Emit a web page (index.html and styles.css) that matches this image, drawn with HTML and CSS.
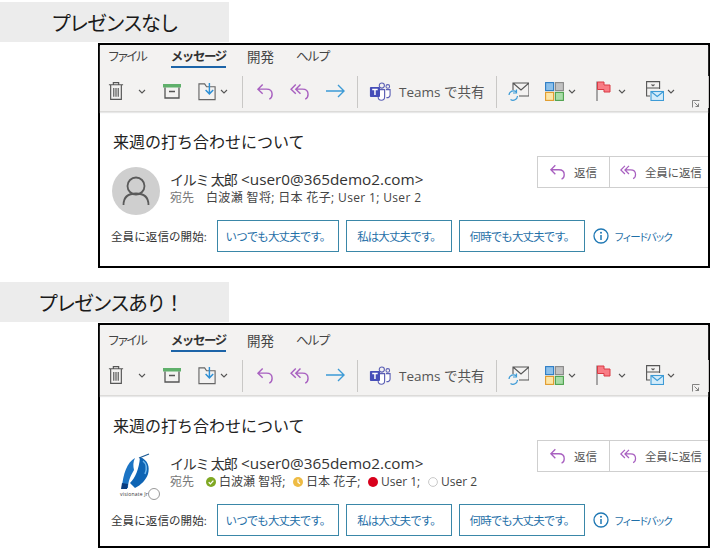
FILE: index.html
```html
<!DOCTYPE html>
<html lang="ja">
<head>
<meta charset="utf-8">
<title>プレゼンス</title>
<link rel="stylesheet" href="styles.css">
</head>
<body>
<svg class="defs" width="0" height="0">
  <symbol id="trash" viewBox="0 0 18 22"><path d="M1 4h16M6 4V1.500h6V4M3 4v16.500h12V4M6.500 7.500v10M9 7.500v10M11.500 7.500v10" fill="none" stroke="#555" stroke-width="1.300"/></symbol>
  <symbol id="chev" viewBox="0 0 8 5"><path d="M1 1l3 3 3-3" fill="none" stroke="#555" stroke-width="1.100"/></symbol>
  <symbol id="archive" viewBox="0 0 18 16"><rect x="0" y="1" width="18" height="3.500" fill="#5fb06b"/><path d="M2 4.500v10.500h14V4.500M6 8.500h6" fill="none" stroke="#555" stroke-width="1.300"/></symbol>
  <symbol id="move" viewBox="0 0 20 20"><path d="M1 18.500V2h6l2 3h9v13.500z" fill="none" stroke="#666" stroke-width="1.200"/><path d="M12 1v11M8 8.500l4 4 4-4" fill="none" stroke="#2d8fd5" stroke-width="1.500"/></symbol>
  <symbol id="reply" viewBox="0 0 20 18"><path d="M7 1.500L2 6.500l5 5M2 6.500h9c4 0 6 2.500 6 5.500s-1.500 4.500-3 5" fill="none" stroke="#a860c0" stroke-width="1.500"/></symbol>
  <symbol id="replyall" viewBox="0 0 22 18"><path d="M6 1.500L1 6.500l5 5M11 1.500L6 6.500l5 5M6 6.500h7c4 0 6 2.500 6 5.500s-1.500 4.500-3 5" fill="none" stroke="#a860c0" stroke-width="1.500"/></symbol>
  <symbol id="forward" viewBox="0 0 20 14"><path d="M0 7h18M12 1l6 6-6 6" fill="none" stroke="#3d9bd6" stroke-width="1.400"/></symbol>
  <symbol id="teams" viewBox="0 0 24 20"><circle cx="14" cy="3.500" r="2.800" fill="none" stroke="#5b5fb5" stroke-width="1.200"/><circle cx="20.500" cy="4.500" r="2" fill="none" stroke="#5b5fb5" stroke-width="1.100"/><path d="M10 8h7v8a3.500 3.500 0 0 1-7 0zM18.500 8H23v6a3 3 0 0 1-4 2.500" fill="#fff" stroke="#5b5fb5" stroke-width="1.200"/><rect x="1" y="5" width="11" height="11" rx="1" fill="#464eb8"/><path d="M3.500 7.800h6M6.500 7.800v6" fill="none" stroke="#fff" stroke-width="1.600"/></symbol>
  <symbol id="mailsync" viewBox="0 0 21 19"><path d="M5 8V1h16v13H11M5 1l8 7 8-7" fill="none" stroke="#555" stroke-width="1.100"/><path d="M1 13a4.500 4.500 0 0 1 7.500-3M8.500 7.500V11H5M9.500 14a4.500 4.500 0 0 1-7 3.500" fill="none" stroke="#3d9bd6" stroke-width="1.200"/></symbol>
  <symbol id="cats" viewBox="0 0 19 19"><rect x=".6" y=".6" width="8" height="8" fill="#8cc0ea" stroke="#2b7cc4" stroke-width="1.100"/><rect x="10.400" y=".6" width="8" height="8" fill="#c2c2c2" stroke="#888" stroke-width="1.100"/><rect x=".6" y="10.400" width="8" height="8" fill="#fde6a8" stroke="#e09a2b" stroke-width="1.100"/><rect x="10.400" y="10.400" width="8" height="8" fill="#a8dca8" stroke="#4da24d" stroke-width="1.100"/></symbol>
  <symbol id="flag" viewBox="0 0 15 20"><path d="M1 0.500V20" stroke="#666" stroke-width="1.100"/><path d="M1.500 1h6.500v3h6v7H8V8.500H1.500z" fill="#f97c85" stroke="#d93a44" stroke-width="1"/></symbol>
  <symbol id="rules" viewBox="0 0 18 20"><path d="M4 15H.6V.6h13V8M.6 7h13M5.500 3.500l1.500 1.200 1.500-1.200" fill="none" stroke="#555" stroke-width="1.100"/><rect x="5" y="10.500" width="12.500" height="9" fill="#d3ecfa" stroke="#3d9bd6" stroke-width="1.100"/><path d="M5 10.500l6.200 5 6.300-5" fill="none" stroke="#3d9bd6" stroke-width="1.100"/></symbol>
  <symbol id="launch" viewBox="0 0 8 8"><path d="M.5 7.500V.5h7M2.500 2.500l4 4M3.500 6.500h3v-3" fill="none" stroke="#666" stroke-width=".8"/></symbol>
  <symbol id="person" viewBox="0 0 48 48"><circle cx="24" cy="24" r="24" fill="#cfcfcf"/><circle cx="24" cy="19" r="8.500" fill="none" stroke="#5a5a5a" stroke-width="1.800"/><path d="M11.500 38c0-9 5.500-11.500 12.500-11.500S36.500 29 36.500 38" fill="none" stroke="#5a5a5a" stroke-width="1.800"/></symbol>
  <symbol id="logo" viewBox="0 0 48 48"><path d="M23 7C15 11 11 24 10 36l6 1c0-7 3-13 6-18-1-4-1-8 1-12z" fill="#1c74c4"/><path d="M10 32l-1 6 6 0 1-5z" fill="#0a3d80"/><path d="M28 6c8 3 10 10 8 17-2 6-7 11-13 14l-5-5c5-5 9-13 10-26z" fill="#0e64b4"/><path d="M31 10c4 3 4 8 2 13" fill="none" stroke="#6db6ec" stroke-width="1.500"/><path d="M27 7l10-4" stroke="#1c5a94" stroke-width="1.200"/></symbol>
  <symbol id="info" viewBox="0 0 16 16"><circle cx="8" cy="8" r="7" fill="none" stroke="#1f78b4" stroke-width="1.300"/><path d="M8 7v5" stroke="#1f78b4" stroke-width="1.500"/><circle cx="8" cy="4.700" r="1" fill="#1f78b4"/></symbol>
  <symbol id="p-green" viewBox="0 0 10 10"><circle cx="5" cy="5" r="5" fill="#7fa823"/><path d="M2.700 5.200l1.700 1.700 3-3.300" fill="none" stroke="#fff" stroke-width="1.300"/></symbol>
  <symbol id="p-yellow" viewBox="0 0 10 10"><circle cx="5" cy="5" r="5" fill="#eebb44"/><path d="M5 2.200V5.300l2 1.400" fill="none" stroke="#fff" stroke-width="1.200"/></symbol>
  <symbol id="p-red" viewBox="0 0 10 10"><circle cx="5" cy="5" r="5" fill="#d8001c"/></symbol>
  <symbol id="p-none" viewBox="0 0 10 10"><circle cx="5" cy="5" r="4.400" fill="#fff" stroke="#c8c8c8"/></symbol>
</svg>

<div class="section-label"><span class="label-a">プレゼンスなし</span></div>
<section class="mail">
  <div class="ribbon">
    <nav class="tabs"><span class="tab t1">ファイル</span><span class="tab tab-on">メッセージ</span><span class="tab t3">開発</span><span class="tab t4">ヘルプ</span></nav>
    <div class="tools">
      <svg class="i-trash"><use href="#trash"/></svg><svg class="chev c-a"><use href="#chev"/></svg>
      <svg class="i-archive"><use href="#archive"/></svg><svg class="i-move"><use href="#move"/></svg><svg class="chev c-b"><use href="#chev"/></svg>
      <i class="sep s1"></i>
      <svg class="i-reply"><use href="#reply"/></svg><svg class="i-replyall"><use href="#replyall"/></svg><svg class="i-forward"><use href="#forward"/></svg>
      <i class="sep s2"></i>
      <svg class="i-teams"><use href="#teams"/></svg><span class="teams-text">Teams で共有</span>
      <i class="sep s3"></i>
      <svg class="i-mailsync"><use href="#mailsync"/></svg><svg class="i-cats"><use href="#cats"/></svg><svg class="chev c-c"><use href="#chev"/></svg>
      <svg class="i-flag"><use href="#flag"/></svg><svg class="chev c-d"><use href="#chev"/></svg>
      <svg class="i-rules"><use href="#rules"/></svg><svg class="chev c-e"><use href="#chev"/></svg>
      <svg class="i-launch"><use href="#launch"/></svg><i class="sep s4"></i>
    </div>
  </div>
  <div class="body">
    <h2 class="subject">来週の打ち合わせについて</h2>
    <div class="head">
      <svg class="avatar"><use href="#person"/></svg>
      <div class="who">
        <div class="from"><span class="from-name">イルミ 太郎</span><span class="from-addr">&lt;user0@365demo2.com&gt;</span></div>
        <div class="to"><span class="to-key">宛先</span><span class="plain">白波瀬 智将; 日本 花子; User 1; User 2</span></div>
      </div>
      <div class="actions">
        <span class="act act-1"><svg class="act-i"><use href="#reply"/></svg>返信</span><span class="act act-2"><svg class="act-i"><use href="#replyall"/></svg>全員に返信</span>
      </div>
    </div>
    <div class="quick">
      <span class="quick-label">全員に返信の開始:</span>
      <span class="qbtn q1">いつでも大丈夫です。</span><span class="qbtn q2">私は大丈夫です。</span><span class="qbtn q3">何時でも大丈夫です。</span>
      <svg class="i-info"><use href="#info"/></svg><span class="fb">フィードバック</span>
    </div>
  </div>
</section>

<div class="section-label second"><span class="label-b">プレゼンスあり！</span></div>
<section class="mail mail-b">
  <div class="ribbon">
    <nav class="tabs"><span class="tab t1">ファイル</span><span class="tab tab-on">メッセージ</span><span class="tab t3">開発</span><span class="tab t4">ヘルプ</span></nav>
    <div class="tools">
      <svg class="i-trash"><use href="#trash"/></svg><svg class="chev c-a"><use href="#chev"/></svg>
      <svg class="i-archive"><use href="#archive"/></svg><svg class="i-move"><use href="#move"/></svg><svg class="chev c-b"><use href="#chev"/></svg>
      <i class="sep s1"></i>
      <svg class="i-reply"><use href="#reply"/></svg><svg class="i-replyall"><use href="#replyall"/></svg><svg class="i-forward"><use href="#forward"/></svg>
      <i class="sep s2"></i>
      <svg class="i-teams"><use href="#teams"/></svg><span class="teams-text">Teams で共有</span>
      <i class="sep s3"></i>
      <svg class="i-mailsync"><use href="#mailsync"/></svg><svg class="i-cats"><use href="#cats"/></svg><svg class="chev c-c"><use href="#chev"/></svg>
      <svg class="i-flag"><use href="#flag"/></svg><svg class="chev c-d"><use href="#chev"/></svg>
      <svg class="i-rules"><use href="#rules"/></svg><svg class="chev c-e"><use href="#chev"/></svg>
      <svg class="i-launch"><use href="#launch"/></svg><i class="sep s4"></i>
    </div>
  </div>
  <div class="body">
    <h2 class="subject">来週の打ち合わせについて</h2>
    <div class="head">
      <span class="avatar-wrap"><svg class="avatar"><use href="#logo"/></svg><span class="logo-caption">visionate Jr</span><span class="presence"></span></span>
      <div class="who">
        <div class="from"><span class="from-name">イルミ 太郎</span><span class="from-addr">&lt;user0@365demo2.com&gt;</span></div>
        <div class="to"><span class="to-key">宛先</span><span class="rcpt r1"><svg class="dot"><use href="#p-green"/></svg>白波瀬 智将;</span><span class="rcpt r2"><svg class="dot"><use href="#p-yellow"/></svg>日本 花子;</span><span class="rcpt r3"><svg class="dot"><use href="#p-red"/></svg>User 1;</span><span class="rcpt"><svg class="dot"><use href="#p-none"/></svg>User 2</span></div>
      </div>
      <div class="actions">
        <span class="act act-1"><svg class="act-i"><use href="#reply"/></svg>返信</span><span class="act act-2"><svg class="act-i"><use href="#replyall"/></svg>全員に返信</span>
      </div>
    </div>
    <div class="quick">
      <span class="quick-label">全員に返信の開始:</span>
      <span class="qbtn q1">いつでも大丈夫です。</span><span class="qbtn q2">私は大丈夫です。</span><span class="qbtn q3">何時でも大丈夫です。</span>
      <svg class="i-info"><use href="#info"/></svg><span class="fb">フィードバック</span>
    </div>
  </div>
</section>
</body>
</html>
```
FILE: styles.css
```css
* { box-sizing: border-box; }
html, body { margin: 0; padding: 0; background: #fff; }
body {
  width: 710px;
  height: 548px;
  overflow: hidden;
  padding-top: 2px;
  font-family: "Open Sans", "Noto Sans CJK JP", sans-serif;
  color: #333;
}
.defs { display: block; height: 0; }
svg { display: block; flex: none; }

.section-label {
  width: 229px;
  height: 40px;
  background: #ececec;
  display: flex;
  align-items: center;
  font-size: 20px;
  color: #1a1a1a;
  letter-spacing: -1.900px;
}
.label-a { margin-left: 51px; }
.label-b { margin-left: 38px; }
.second { margin-top: 14px; }

.mail {
  margin: 1px 0 0 98px;
  width: 612px;
  height: 225px;
  border: 2px solid #000;
  background: #fff;
}
.ribbon {
  height: 67px;
  background: #f3f2f1;
  border-bottom: 1px solid #dcdbd9;
  box-shadow: 0 1px 1px #e8e8e8;
}
.mail-b .ribbon { height: 71px; padding-top: 4px; }
.tabs {
  display: flex;
  height: 31px;
  padding: 2px 0 0 7.500px;
  font-size: 12.500px;
  color: #444;
}
.tab { height: 21px; line-height: 20px; letter-spacing: -1.500px; white-space: nowrap; }
.t1 { margin-right: 26px; letter-spacing: -3.200px; }
.t3 { margin-left: 21px; margin-right: 22px; font-size: 13.500px; letter-spacing: 0; }
.tab-on {
  font-weight: 700;
  color: #333;
  border-bottom: 2.500px solid #1c64a8;
  letter-spacing: -1.400px;
}
.tools {
  display: flex;
  align-items: center;
  height: 34px;
  padding-left: 8px;
  margin-top: -2px;
}
.sep { display: block; flex: none; width: 1px; height: 32px; margin-top: 2px; background: #c9c8c6; }
.chev { width: 8px; height: 5px; }
.i-trash { width: 16px; height: 20px; }
.c-a { margin-left: 14px; }
.i-archive { width: 18px; height: 16px; margin-left: 17px; }
.i-move { width: 19px; height: 19px; margin-left: 17px; }
.c-b { margin-left: 3px; }
.s1 { margin-left: 14px; }
.i-reply { width: 19px; height: 17px; margin-left: 13px; }
.i-replyall { width: 21px; height: 17px; margin-left: 15px; }
.i-forward { width: 20px; height: 14px; margin-left: 15px; }
.s2 { margin-left: 11px; }
.i-teams { width: 22px; height: 19px; margin-left: 11px; }
.teams-text { margin-left: 8px; font-size: 13.500px; color: #555; white-space: nowrap; width: 86px; flex: none; }
.s3 { margin-left: 11px; }
.i-mailsync { width: 21px; height: 19px; margin-left: 11px; }
.i-cats { width: 19px; height: 19px; margin-left: 16px; }
.c-c { margin-left: 4px; }
.i-flag { width: 15px; height: 20px; margin-left: 20px; }
.c-d { margin-left: 7px; }
.i-rules { width: 18px; height: 20px; margin-left: 20px; }
.c-e { margin-left: 3px; }
.i-launch { width: 8px; height: 8px; margin-left: 17px; margin-top: 26px; }
.s4 { margin-left: 8px; }

.body { padding: 17px 0 0 12px; }
.subject {
  margin: 0 0 0 1px;
  font-size: 16px;
  font-weight: 400;
  line-height: 26px;
  color: #222;
}
.head { display: flex; margin-top: 12px; height: 50px; position: relative; }
.avatar { width: 48px; height: 48px; }
.who { margin-left: 10px; padding-top: 3px; }
.from { display: flex; height: 19px; line-height: 19px; color: #333; white-space: nowrap; }
.from-name { width: 71px; font-size: 14px; letter-spacing: -1.200px; }
.from-addr { font-size: 15.300px; }
.to { display: flex; font-size: 12px; line-height: 17px; color: #444; white-space: nowrap; }
.to-key { color: #777; margin-right: 12px; }
.plain { letter-spacing: .35px; }
.rcpt { display: flex; align-items: center; }
.r1 { width: 87px; }
.r2 { width: 75px; }
.r3 { width: 60px; }
.dot { width: 10px; height: 10px; margin-right: 3px; }

.actions {
  position: absolute;
  top: -11px;
  right: 0;
  display: flex;
  height: 32px;
  border: 1px solid #cfcfcf;
  border-right: 0;
  background: #fff;
  font-size: 11.500px;
  color: #555;
}
.act { display: flex; align-items: center; height: 30px; white-space: nowrap; }
.act-1 { width: 72px; padding-left: 11px; border-right: 1px solid #cfcfcf; }
.act-2 { width: 98px; padding-left: 10px; letter-spacing: -.2px; }
.act-i { width: 18px; height: 16px; margin-right: 7px; }

.avatar-wrap { position: relative; display: block; width: 48px; height: 48px; flex: none; }
.logo-caption {
  position: absolute;
  left: 8px;
  top: 39px;
  font-size: 5px;
  line-height: 8px;
  letter-spacing: .2px;
  color: #333;
  white-space: nowrap;
}
.presence {
  position: absolute;
  left: 36px;
  top: 37px;
  width: 12px;
  height: 12px;
  border-radius: 50%;
  background: #fff;
  border: 1px solid #999;
}

.quick { display: flex; align-items: center; height: 32px; margin-top: 3px; }
.quick-label { width: 105px; margin-left: -1px; margin-right: 1px; font-size: 11.500px; color: #333; white-space: nowrap; letter-spacing: .1px; }
.qbtn {
  display: flex;
  align-items: center;
  justify-content: center;
  height: 32px;
  border: 1px solid #3a87a8;
  font-size: 11.500px;
  color: #1f70a8;
  white-space: nowrap;
  background: #fff;
  margin-right: 7px;
  letter-spacing: -.9px;
}
.q1 { width: 122px; }
.q2 { width: 106px; }
.q3 { width: 126px; margin-right: 8px; }
.i-info { width: 16px; height: 16px; }
.fb { margin-left: 5px; font-size: 10.500px; color: #1f70a8; white-space: nowrap; letter-spacing: -2.300px; }
```
